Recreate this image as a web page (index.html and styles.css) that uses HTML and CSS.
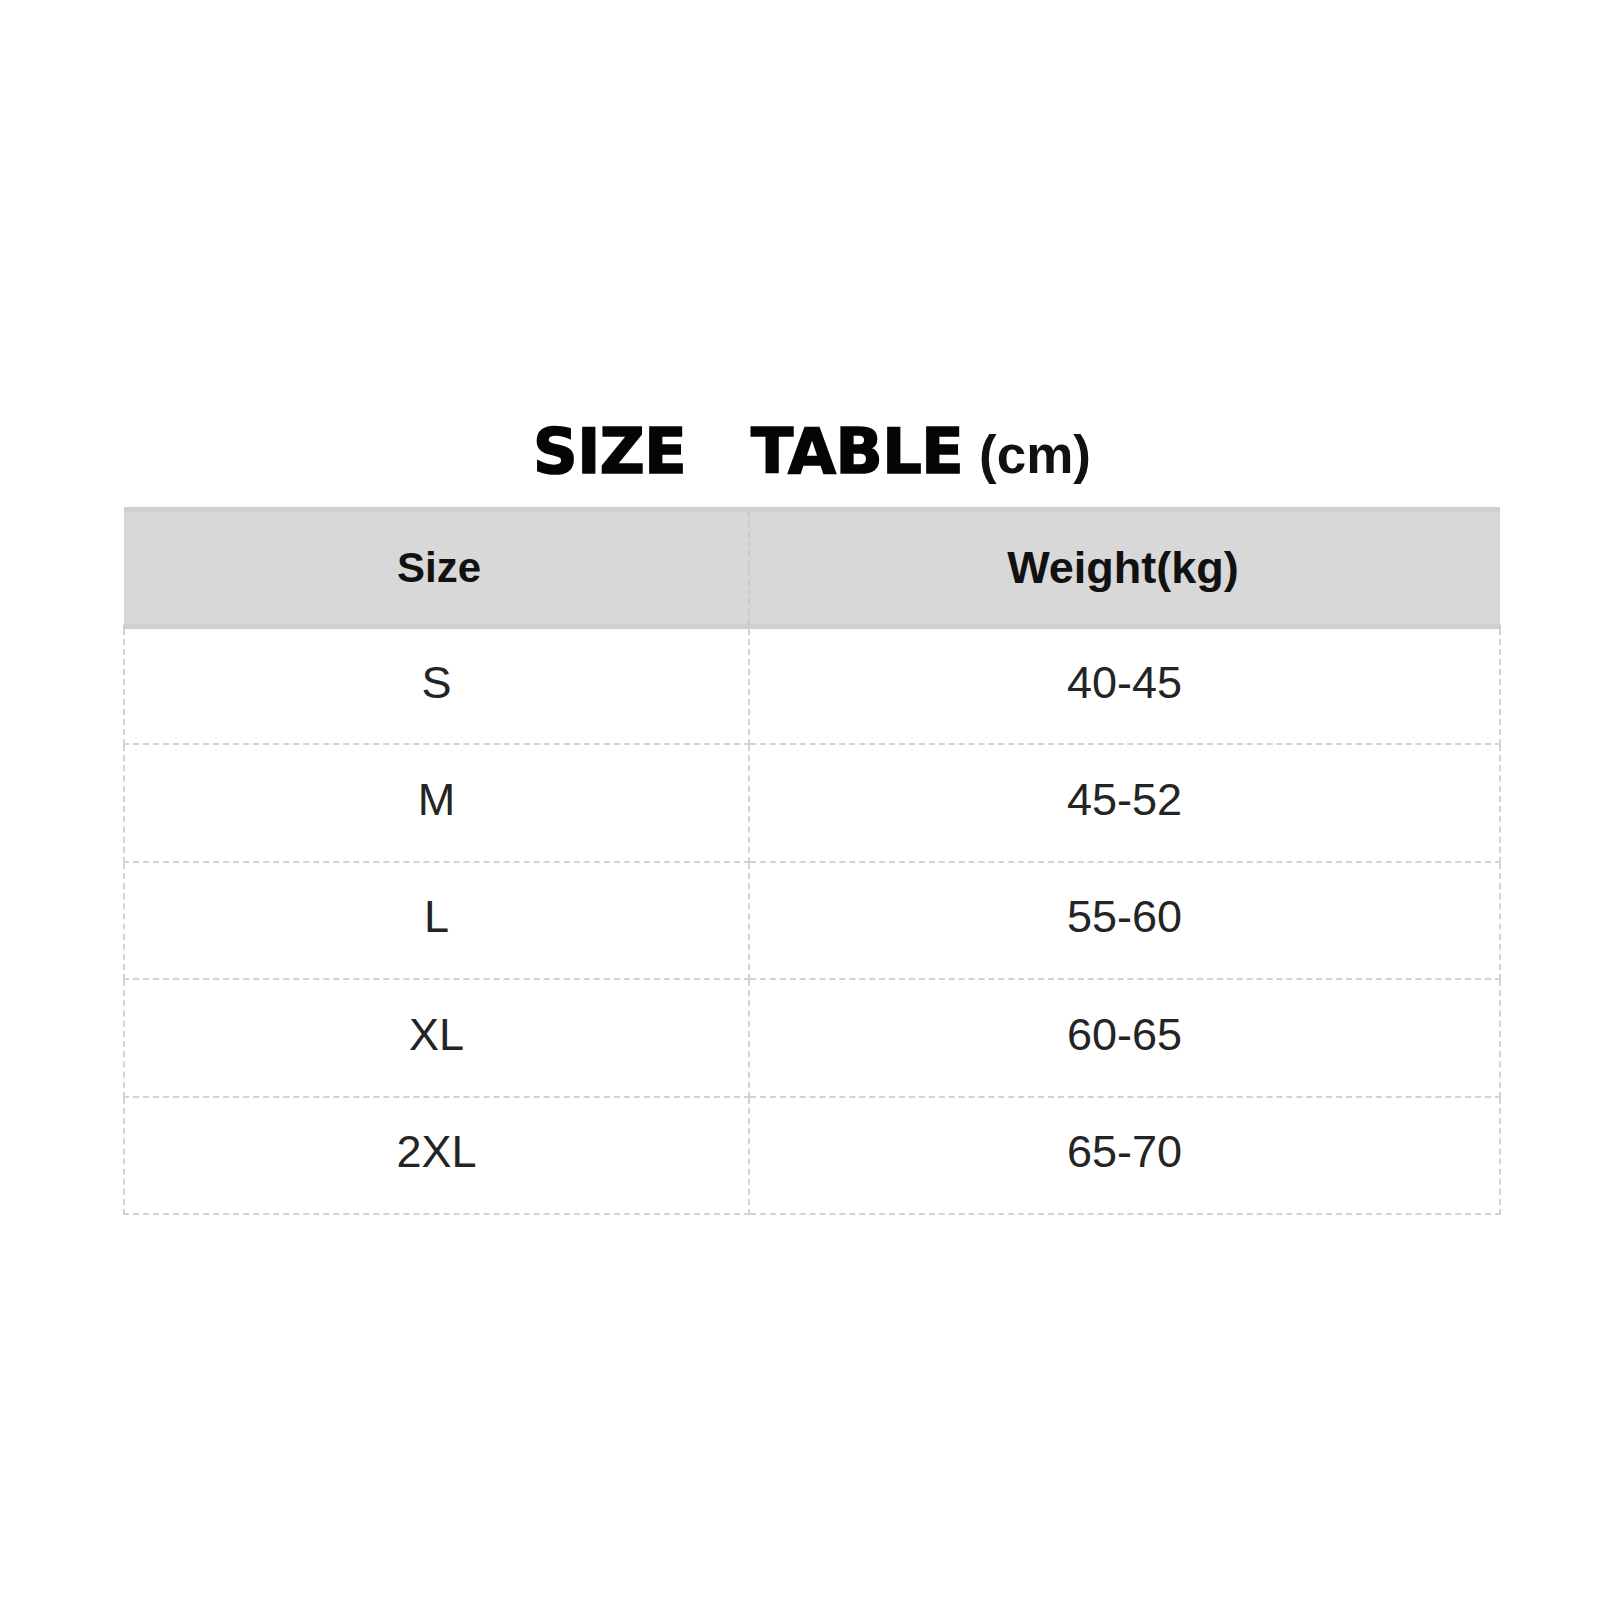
FILE: index.html
```html
<!DOCTYPE html>
<html lang="en">
<head>
<meta charset="utf-8">
<title>Size Table</title>
<link rel="stylesheet" href="styles.css">
</head>
<body>
<main class="page">
  <h1 class="title"><span class="title-main">SIZE</span><span class="title-main title-gap">TABLE</span><span class="title-unit">(cm)</span></h1>
  <table class="size-table">
    <colgroup>
      <col class="col-size">
      <col class="col-weight">
    </colgroup>
    <thead>
      <tr>
        <th class="th-size">Size</th>
        <th class="th-weight">Weight(kg)</th>
      </tr>
    </thead>
    <tbody>
      <tr><td>S</td><td>40-45</td></tr>
      <tr><td>M</td><td>45-52</td></tr>
      <tr><td>L</td><td>55-60</td></tr>
      <tr><td>XL</td><td>60-65</td></tr>
      <tr><td>2XL</td><td>65-70</td></tr>
    </tbody>
  </table>
</main>
</body>
</html>
```

FILE: styles.css
```css
html, body {
  margin: 0;
  padding: 0;
  background: #ffffff;
}

.page {
  width: 1600px;
  height: 1600px;
  box-sizing: border-box;
  padding-top: 422px;
  display: flex;
  flex-direction: column;
  align-items: center;
}

.title {
  margin: 0 0 0 24px;
  display: flex;
  align-items: baseline;
  height: 85px;
  line-height: 60px;
  color: #050505;
}

.title-main {
  font-family: "DejaVu Sans", "Liberation Sans", sans-serif;
  font-weight: bold;
  font-size: 62px;
  -webkit-text-stroke: 1.6px #050505;
  letter-spacing: -0.5px;
}

.title-gap {
  margin-left: 65px;
}

.title-unit {
  font-family: "Liberation Sans", Arial, sans-serif;
  font-weight: bold;
  font-size: 53px;
  margin-left: 16px;
  color: #111;
}

.size-table {
  width: 1376px;
  margin-left: 24px;
  border-collapse: collapse;
  table-layout: fixed;
}

.col-size { width: 625px; }
.col-weight { width: 751px; }

.size-table th {
  height: 112px;
  background: #d8d8d8;
  border-top: 5px solid #cfcfcf;
  border-bottom: 5px solid #d0d0d0;
  font-family: "Liberation Sans", Arial, sans-serif;
  font-weight: bold;
  color: #111;
  text-align: center;
  vertical-align: middle;
  padding: 0;
}

.size-table th.th-size {
  font-size: 42px;
  border-right: 2px dashed #cacaca;
  padding-left: 6px;
}

.size-table th.th-weight {
  font-size: 45px;
  padding-right: 4px;
}

.size-table td {
  height: 117.5px;
  padding: 0 0 6px 0;
  box-sizing: border-box;
  border: 2px dashed #d3d3d3;
  font-family: "Liberation Sans", Arial, sans-serif;
  font-size: 45px;
  color: #242424;
  text-align: center;
  vertical-align: middle;
}

.size-table td:first-child {
  padding-left: 0;
}
```
